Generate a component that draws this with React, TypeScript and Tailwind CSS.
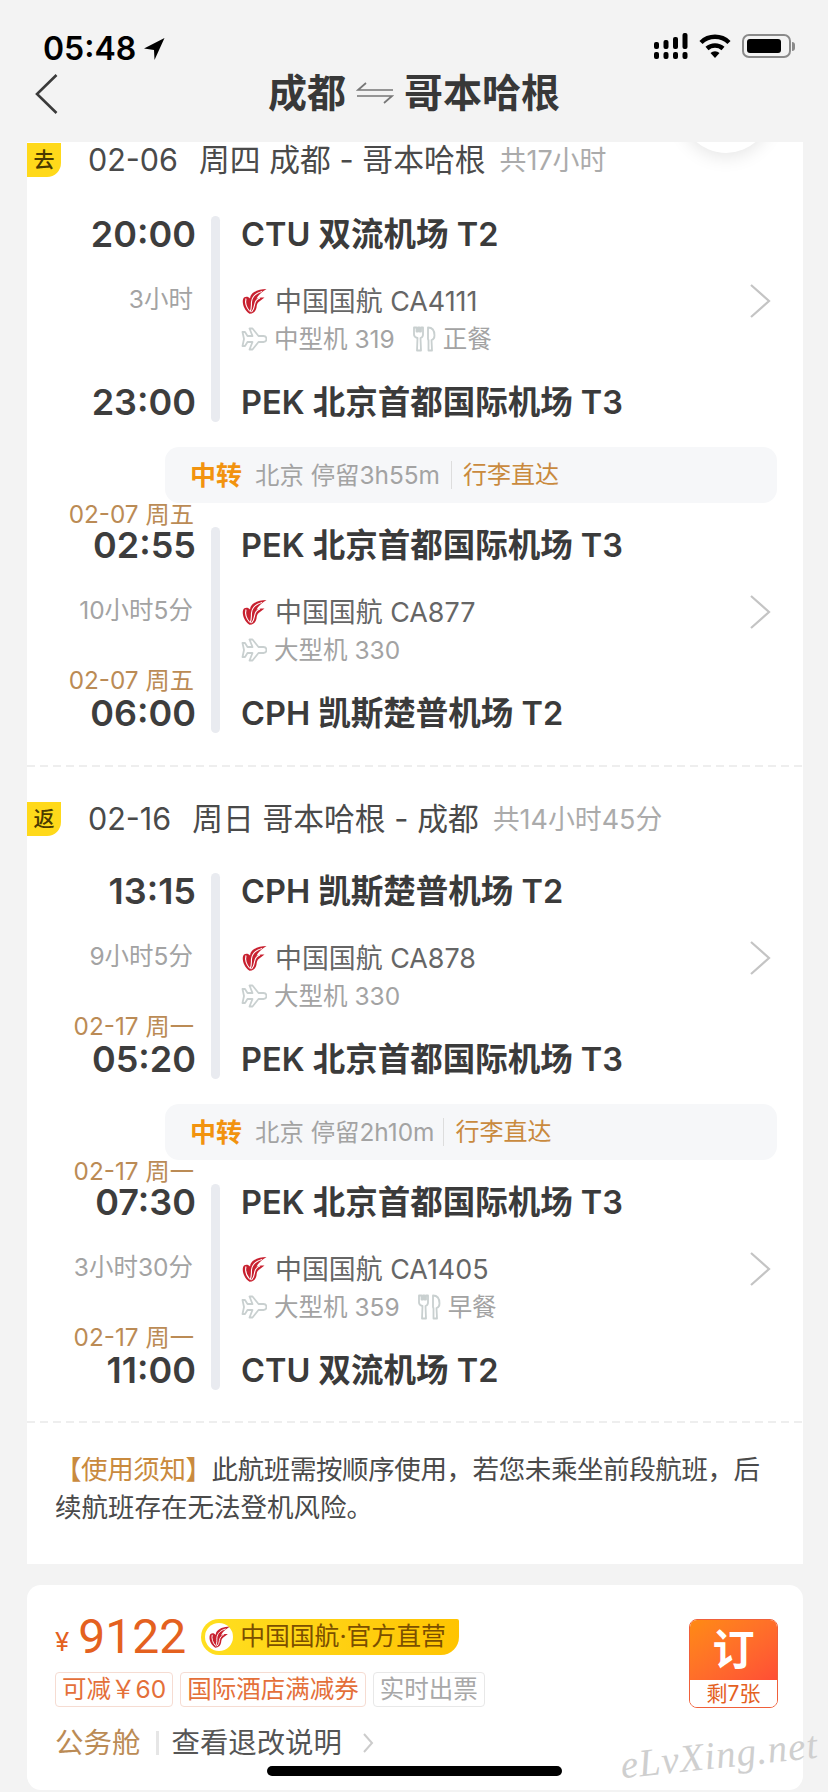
const FONT = "font-['Inter','Noto_Sans_CJK_SC',sans-serif]";

const CaLogo = ({ className }: { className: string }) => (
  <svg viewBox="0 0 26 26" className={className}>
    <path fill="#c8202f" d="M25.500 1C19 1 12 3 9.500 8L9 10.500C7.500 8.500 5 8 3 9.500 .5 12 1.500 21 8.500 25.800c4-.3 6.500-2.800 7-6.300.2-2.500.7-4.500 2.500-5.800l5.500-4.200c-3-.2-6 .3-8 1.300C17 7.500 20 4.500 25.500 1z" />
    <path fill="none" stroke="#ffffff" strokeWidth="1.100" d="M21 3.500C15 5 11 8.500 10.500 14c-.3 3 .5 6-1.500 10" />
    <path fill="none" stroke="#ffffff" strokeWidth="1.100" d="M5 10.500c-1 4 .5 9 3.500 12.500" />
    <path fill="none" stroke="#ffffff" strokeWidth="1.100" d="M19 10c-3 1-5 3.500-5.500 7-.3 2.500-1 5-3 7" />
  </svg>
);

const PlaneIcon = () => (
  <svg viewBox="0 0 26 24" className="h-[24px] w-[26px] shrink-0" fill="none" stroke="#c9d0d0" strokeWidth="1.800" strokeLinejoin="round">
    <path d="M1.500 5l2.500 0 2.500 4 5 0L8.500 1.500l3 0 6 7.500 5 0c2 0 3 1.300 3 3s-1 3-3 3l-5 0-6 7.500-3 0 3-7.500-5 0-2.500 4-2.500 0 1.500-7z" />
  </svg>
);

const MealIcon = () => (
  <svg viewBox="0 0 24 26" className="h-[26px] w-[24px] shrink-0" fill="none" stroke="#c9d0d0" strokeWidth="1.800" strokeLinejoin="round">
    <path d="M2 1.500h2.500v4h1.500v-4h1.500v4H9v-4h2v7c0 2-1 3-2.500 3.500l.5 12.500H5L5.500 12C3 11.500 2 10.500 2 8.500z" />
    <path d="M16 1.500c4 0 6.500 3 6.500 8 0 2.500-1 4-3 4.500l.5 10.500h-3.500L16.500 14c-.5 0-.5-.5-.5-1z" />
  </svg>
);

const LegChevron = () => (
  <svg viewBox="0 0 22 36" className="mt-[1px] h-[36px] w-[22px] shrink-0" fill="none" stroke="#c4c4c4" strokeWidth="2.200"><path d="M2 2l18 16L2 34" /></svg>
);

type LegProps = {
  depDate?: string;
  depTime: string;
  duration: string;
  arrDate?: string;
  arrTime: string;
  from: string;
  to: string;
  flight: string;
  plane: string;
  meal?: string;
};

const Leg = ({ depDate, depTime, duration, arrDate, arrTime, from, to, flight, plane, meal }: LegProps) => (
  <div className="flex h-[206px]">
    {/* 左侧时间 */}
    <div className="flex w-[169px] shrink-0 flex-col items-end">
      {depDate && <div className="-mt-[27px] mr-[2px] h-[27px] text-[24.300px] leading-[28px] text-[#bb8b55]">{depDate}</div>}
      <div className="h-[36px] text-[36px] font-semibold leading-[36px] text-[#3d3d3d]">{depTime}</div>
      <div className="mr-[3px] mt-[29px] h-[36px] text-[24.500px] leading-[36px] text-[#a3a3a3]">{duration}</div>
      <div className="flex-1" />
      {arrDate && <div className="mb-[1px] mr-[2px] h-[28px] text-[24.300px] leading-[28px] text-[#bb8b55]">{arrDate}</div>}
      <div className="mb-[2px] h-[36px] text-[36px] font-semibold leading-[36px] text-[#3d3d3d]">{arrTime}</div>
    </div>
    <div className="ml-[15px] w-[9px] shrink-0 rounded-full bg-[#e9ebf0]" />
    {/* 右侧航班 */}
    <div className="ml-[21px] flex flex-1 flex-col pr-[32px]">
      <div className="h-[38px] text-[32.500px] font-semibold leading-[38px] text-[#3b3b3b]">{from}</div>
      <div className="mt-[28px] flex items-start justify-between">
        <div>
          <div className="flex h-[38px] items-center text-[26.900px] text-[#666666]">
            <CaLogo className="h-[26px] w-[26px] shrink-0" />
            <span className="ml-[8px]">{flight}</span>
          </div>
          <div className="flex h-[38px] items-center text-[24.500px] text-[#a3a3a3]">
            <PlaneIcon />
            <span className="ml-[7px]">{plane}</span>
            {meal && (
              <>
                <span className="ml-[17px]"><MealIcon /></span>
                <span className="ml-[7px]">{meal}</span>
              </>
            )}
          </div>
        </div>
        <LegChevron />
      </div>
      <div className="flex-1" />
      <div className="h-[38px] text-[32.500px] font-semibold leading-[38px] text-[#3b3b3b]">{to}</div>
    </div>
  </div>
);

const Transfer = ({ stay, gap }: { stay: string; gap: string }) => (
  <div className="ml-[138px] mr-[26px] flex h-[56px] items-center rounded-[14px] bg-[#f6f7f9] pl-[25px]">
    <span className="text-[26px] font-semibold text-[#f2930f]">中转</span>
    <span className="ml-[13px] text-[24.400px] text-[#a3a3a3]">{stay}</span>
    <span className={`h-[28px] w-px bg-[#dddddd] ${gap}`} />
    <span className="ml-[11px] text-[24px] text-[#c98a3e]">行李直达</span>
  </div>
);

const DayHeader = ({ tag, date, route, total, className }: { tag: string; date: string; route: string; total: string; className: string }) => (
  <div className={`flex items-center ${className}`}>
    <div className="flex h-[34px] w-[34px] shrink-0 items-center justify-center rounded-br-[14px] bg-[#ffd91a] text-[21px] font-medium text-[#4a3a00]">{tag}</div>
    <span className="ml-[27px] text-[30.500px] text-[#4a4a4a]">{date}</span>
    <span className="ml-[21px] whitespace-pre text-[30.800px] text-[#4a4a4a]">{route}</span>
    <span className="ml-[14px] text-[26.900px] text-[#ababab]">{total}</span>
  </div>
);

const Tag = ({ text, gray }: { text: string; gray?: boolean }) => (
  <div className={`flex h-[35px] items-center rounded-[4px] border px-[6px] text-[24.500px] ${gray ? 'border-[#e8e8e8] text-[#a8a8a8]' : 'border-[#f6dcd2] text-[#e4703a]'}`}>{text}</div>
);

const Dashed = ({ className }: { className: string }) => (
  <div className={`h-[2px] bg-[repeating-linear-gradient(90deg,#eeeeee_0,#eeeeee_8px,transparent_8px,transparent_13px)] ${className}`} />
);

export default function App() {
  return (
    <div className={`relative h-[1792px] w-[828px] overflow-hidden bg-[#f3f3f3] ${FONT}`}>
      {/* 状态栏 */}
      <div className="flex h-[74px] items-start justify-between pl-[43px] pr-[33px] pt-[33px]">
        <div className="flex items-center text-black">
          <span className="text-[32px] font-semibold leading-[32px]">05:48</span>
          <svg viewBox="0 0 22 24" className="ml-[7px] h-[24px] w-[22px]" fill="#000"><path d="M21.500 1 1 11.500l10 1.500.5 10z" /></svg>
        </div>
        <div className="flex items-center">
          <svg viewBox="0 0 34 26" className="h-[26px] w-[34px]" fill="#000">
            <rect x="0" y="9" width="5" height="7" rx="2" /><rect x="9.500" y="7" width="5" height="9" rx="2" /><rect x="19" y="4" width="5" height="12" rx="2" /><rect x="28.500" y="0" width="5" height="16" rx="2" />
            <rect x="0" y="19" width="5" height="7" rx="2" /><rect x="9.500" y="19" width="5" height="7" rx="2" /><rect x="19" y="19" width="5" height="7" rx="2" /><rect x="28.500" y="19" width="5" height="7" rx="2" />
          </svg>
          <svg viewBox="0 0 32 26" className="ml-[11px] h-[26px] w-[32px]" fill="none" stroke="#000" strokeWidth="4.500">
            <path d="M2 9.500a20 20 0 0 1 28 0" /><path d="M8 15.500a12 12 0 0 1 16 0" /><path d="M16 25l-4.500-5a6.500 6.500 0 0 1 9 0z" fill="#000" stroke="none" />
          </svg>
          <div className="ml-[11px] flex h-[24px] w-[49px] items-center rounded-[7px] border-2 border-[#8a8a8a] p-[3px]"><div className="h-full w-[34px] rounded-[3px] bg-black" /></div>
          <div className="ml-[1px] h-[9px] w-[3px] rounded-r-full bg-[#8a8a8a]" />
        </div>
      </div>
      {/* 导航 */}
      <div className="relative flex h-[68px] items-center justify-center pb-[30px] text-[39px] font-semibold leading-[38px] text-[#383838]">
        <svg viewBox="0 0 24 40" className="absolute left-[35px] top-[0px] h-[40px] w-[24px]" fill="none" stroke="#3a3a3a" strokeWidth="2.600"><path d="M21.500 1 2 20l19.500 19" /></svg>
        <span>成都</span>
        <svg viewBox="0 0 38 24" className="mx-[10px] h-[24px] w-[38px]" fill="none" stroke="#777777" strokeWidth="1.700"><path d="M37 9H2L10 2" /><path d="M1 15h35l-8 7" /></svg>
        <span>哥本哈根</span>
      </div>
      {/* 航班卡片 */}
      <div className="relative ml-[27px] mr-[25px] h-[1422px] overflow-hidden bg-white">
        <div className="absolute left-[654px] top-[-79px] h-[90px] w-[90px] rounded-full bg-white shadow-[0_4px_18px_rgba(0,0,0,0.10)]" />
        <DayHeader className="h-[36px]" tag="去" date="02-06" route="周四 成都 - 哥本哈根" total="共17小时" />
        <div className="mt-[38px]">
          <Leg depTime="20:00" duration="3小时" arrTime="23:00" from="CTU 双流机场 T2" to="PEK 北京首都国际机场 T3" flight="中国国航 CA4111" plane="中型机 319" meal="正餐" />
        </div>
        <div className="mt-[25px]"><Transfer stay="北京 停留3h55m" gap="ml-[11px]" /></div>
        <div className="mt-[24px]">
          <Leg depDate="02-07 周五" depTime="02:55" duration="10小时5分" arrDate="02-07 周五" arrTime="06:00" from="PEK 北京首都国际机场 T3" to="CPH 凯斯楚普机场 T2" flight="中国国航 CA877" plane="大型机 330" />
        </div>
        <Dashed className="mt-[32px]" />
        <DayHeader className="mt-[35px] h-[34px]" tag="返" date="02-16" route="周日 哥本哈根 - 成都" total="共14小时45分" />
        <div className="mt-[37px]">
          <Leg depTime="13:15" duration="9小时5分" arrDate="02-17 周一" arrTime="05:20" from="CPH 凯斯楚普机场 T2" to="PEK 北京首都国际机场 T3" flight="中国国航 CA878" plane="大型机 330" />
        </div>
        <div className="mt-[25px]"><Transfer stay="北京 停留2h10m" gap="ml-[9px]" /></div>
        <div className="mt-[24px]">
          <Leg depDate="02-17 周一" depTime="07:30" duration="3小时30分" arrDate="02-17 周一" arrTime="11:00" from="PEK 北京首都国际机场 T3" to="CTU 双流机场 T2" flight="中国国航 CA1405" plane="大型机 359" meal="早餐" />
        </div>
        <Dashed className="mt-[31px]" />
        <div className="ml-[28px] mt-[27px] text-[26.500px] leading-[38px] text-[#4a4a4a]">
          <div className="whitespace-nowrap tracking-[-0.4px]"><span className="text-[#c98a3e]">【使用须知】</span>此航班需按顺序使用，若您未乘坐前段航班，后</div>
          <div>续航班存在无法登机风险。</div>
        </div>
      </div>
      {/* 价格卡片 */}
      <div className="ml-[27px] mr-[25px] mt-[21px] flex h-[205px] justify-between rounded-[14px] bg-white pl-[28px] pr-[25px] pt-[34px]">
        <div>
          <div className="flex h-[36px] items-center">
            <span className="mt-[8px] text-[26px] text-[#e4611f]">¥</span>
            <span className="ml-[9px] font-['Roboto',sans-serif] text-[48px] text-[#e4611f]">9122</span>
            <div className="ml-[15px] flex h-[36px] w-[258px] items-center rounded-l-[18px] rounded-br-[18px] rounded-tr-[2px] bg-gradient-to-r from-[#ffdf1f] to-[#ffc400] pl-[4px]">
              <div className="flex h-[28px] w-[28px] items-center justify-center rounded-full bg-white"><CaLogo className="h-[22px] w-[22px]" /></div>
              <span className="ml-[7px] whitespace-nowrap text-[24.800px] text-[#7b4f00]">中国国航·官方直营</span>
            </div>
          </div>
          <div className="mt-[17px] flex gap-[7px]">
            <Tag text="可减￥60" />
            <Tag text="国际酒店满减券" />
            <Tag text="实时出票" gray />
          </div>
          <div className="mt-[17px] flex h-[38px] items-center">
            <span className="text-[28.500px] text-[#bb8b55]">公务舱</span>
            <span className="ml-[15px] h-[24px] w-[3px] bg-[#e6e6e6]" />
            <span className="ml-[13px] text-[28.400px] text-[#555555]">查看退改说明</span>
            <svg viewBox="0 0 12 22" className="ml-[20px] h-[22px] w-[12px]" fill="none" stroke="#cccccc" strokeWidth="2"><path d="M2 2l8 9-8 9" /></svg>
          </div>
        </div>
        <div className="flex h-[89px] w-[89px] flex-col overflow-hidden rounded-[8px] border border-[#f0603a]">
          <div className="flex h-[60px] items-center justify-center bg-gradient-to-br from-[#ff8a12] to-[#ff4d35] text-[42px] font-semibold leading-none text-white">订</div>
          <div className="flex flex-1 items-center justify-center bg-white text-[21px] leading-none text-[#e4611f]">剩7张</div>
        </div>
      </div>
      {/* 水印和 home 条 */}
      <div className="absolute left-[620px] top-[1733px] -rotate-[6deg] font-['Liberation_Serif',serif] text-[39px] italic leading-[44px] tracking-[1px] text-[#cfcfcf]">eLvXing.net</div>
      <div className="absolute left-[267px] top-[1766px] h-[10px] w-[295px] rounded-full bg-black" />
    </div>
  );
}
